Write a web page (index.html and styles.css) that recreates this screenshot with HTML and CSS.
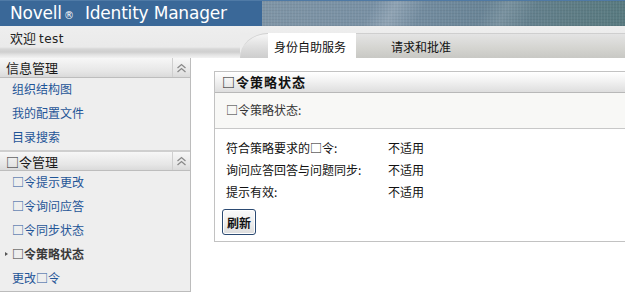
FILE: index.html
```html
<!DOCTYPE html>
<html lang="zh">
<head>
    <meta charset="UTF-8">
    <title>Novell Identity Manager</title>
    <link rel="stylesheet" href="styles.css">
</head>
<body>
    <!-- 顶部标题栏 -->
    <div class="topbar">
        <div class="brand">Novell<span class="reg">®</span> Identity Manager</div>
        <div class="banner-art"></div>
    </div>

    <!-- 欢迎和选项卡 -->
    <div class="navbar">
        <div class="welcome">欢迎 <span class="user">test</span></div>
        <div class="tabs">
            <div class="tab-curve"></div>
            <div class="tab active">身份自助服务</div>
            <div class="tab">请求和批准</div>
        </div>
    </div>

    <div class="layout">
        <!-- 左侧菜单 -->
        <div class="sidebar">
            <div class="section-head">
                <span>信息管理</span>
                <span class="collapse">
                    <svg width="11" height="10" viewBox="0 0 11 10"><path d="M1.5 5 L5.5 1.5 L9.5 5 M1.5 9 L5.5 5.5 L9.5 9" fill="none" stroke="#8a8a8a" stroke-width="1.3"/></svg>
                </span>
            </div>
            <ul class="menu">
                <li><a href="#">组织结构图</a></li>
                <li><a href="#">我的配置文件</a></li>
                <li><a href="#">目录搜索</a></li>
            </ul>
            <div class="section-head second">
                <span>□令管理</span>
                <span class="collapse">
                    <svg width="11" height="10" viewBox="0 0 11 10"><path d="M1.5 5 L5.5 1.5 L9.5 5 M1.5 9 L5.5 5.5 L9.5 9" fill="none" stroke="#8a8a8a" stroke-width="1.3"/></svg>
                </span>
            </div>
            <ul class="menu">
                <li><a href="#">□令提示更改</a></li>
                <li><a href="#">□令询问应答</a></li>
                <li><a href="#">□令同步状态</a></li>
                <li class="current"><span class="marker"></span>□令策略状态</li>
                <li><a href="#">更改□令</a></li>
            </ul>
        </div>

        <!-- 主内容 -->
        <div class="main">
            <div class="panel">
                <div class="panel-head">□令策略状态</div>
                <div class="panel-desc">□令策略状态:</div>
                <div class="panel-body">
                    <div class="row"><span class="label">符合策略要求的□令:</span><span>不适用</span></div>
                    <div class="row"><span class="label">询问应答回答与问题同步:</span><span>不适用</span></div>
                    <div class="row"><span class="label">提示有效:</span><span>不适用</span></div>
                    <button class="btn">刷新</button>
                </div>
            </div>
        </div>
    </div>
</body>
</html>
```

FILE: styles.css
```css
body {
    margin: 0;
    padding: 0;
    width: 625px;
    height: 307px;
    overflow: hidden;
    background: #ffffff;
    font-family: "Noto Sans CJK SC", "DejaVu Sans", sans-serif;
    font-size: 12px;
    color: #222222;
}

/* 标题栏 */
.topbar {
    display: flex;
    height: 26px;
    background: #3a6898;
    border-top: 1px solid #4f7aa6;
    box-sizing: border-box;
}

.brand {
    width: 262px;
    padding-left: 10px;
    box-sizing: border-box;
    color: #ffffff;
    font-family: "DejaVu Sans", sans-serif;
    font-size: 17px;
    line-height: 24px;
    letter-spacing: -0.2px;
    white-space: nowrap;
}

.brand .reg {
    font-size: 10px;
    margin: 0 6px 0 2px;
}

.banner-art {
    flex: 1;
    background:
        repeating-linear-gradient(90deg, rgba(255,255,255,0.06) 0 1px, transparent 1px 3px),
        repeating-linear-gradient(0deg, rgba(0,0,0,0.05) 0 1px, transparent 1px 3px),
        linear-gradient(115deg, transparent 0 30%, rgba(255,255,255,0.18) 36%, transparent 44%, transparent 60%, rgba(255,255,255,0.12) 66%, transparent 74%),
        linear-gradient(90deg, #7f95a6 0%, #7890a4 35%, #6a8597 60%, #5f7d86 85%, #587a80 100%);
}

/* 欢迎和选项卡 */
.navbar {
    display: flex;
    justify-content: space-between;
    height: 32px;
    background: linear-gradient(180deg, #eeeeee 0, #eaeaea 21px, #d6d6d6 23px, #cfcfcf 26px, #e4e4e4 29px, #f2f2f2 32px);
}

.welcome {
    padding: 3px 0 0 10px;
    font-size: 13px;
    line-height: 18px;
    color: #222222;
}

.welcome .user {
    font-family: "DejaVu Sans", sans-serif;
    font-size: 12px;
    letter-spacing: 0.5px;
}

.tabs {
    display: flex;
    align-self: flex-end;
    height: 25px;
    width: 385px;
    background: #ececec;
}

.tab-curve {
    width: 28px;
    background: linear-gradient(180deg, #f6f6f6, #dcdcdc 60%, #cdcdcd);
    border-top-left-radius: 28px 25px;
    border-top: 1px solid #d0d0d0;
}

.tab {
    line-height: 25px;
    font-size: 12px;
    color: #111111;
    background: linear-gradient(180deg, #e4e4e4, #d4d4d0 60%, #c8c8c4);
    border-top: 1px solid #cfcfcf;
    box-sizing: border-box;
    flex: 1;
    padding-left: 35px;
}

.tab.active {
    flex: none;
    width: 88px;
    padding-left: 6px;
    background: #ffffff;
    border-top-color: #ffffff;
}

/* 布局 */
.layout {
    display: flex;
    align-items: flex-start;
}

.sidebar {
    width: 191px;
    box-sizing: border-box;
    background: #eeeeee;
    border-right: 1px solid #bcbcbc;
    border-bottom: 1px solid #bcbcbc;
}

.section-head {
    display: flex;
    justify-content: space-between;
    height: 20px;
    box-sizing: border-box;
    background: linear-gradient(180deg, #f7f7f7, #e6e6e6 70%, #dadada);
    border-bottom: 1px solid #bdbdbd;
    font-size: 13px;
    line-height: 19px;
    color: #1a1a1a;
    padding-left: 6px;
}

.section-head.second {
    border-top: 2px solid #cfcfcf;
    height: 21px;
}

.collapse {
    display: flex;
    align-items: center;
    justify-content: center;
    width: 17px;
    border-left: 1px solid #cfcfcf;
}

.menu {
    list-style: none;
    margin: 0;
    padding: 0;
}

.menu li {
    height: 24px;
    line-height: 22px;
    padding-left: 12px;
    position: relative;
}

.menu a {
    color: #1f5597;
    text-decoration: none;
    font-size: 12px;
}

.menu li.current {
    font-weight: bold;
    color: #3a3a3a;
}

.marker {
    position: absolute;
    left: 5px;
    top: 9px;
    border-left: 3px solid #555555;
    border-top: 2px solid transparent;
    border-bottom: 2px solid transparent;
}

/* 主面板 */
.main {
    flex: 1;
    padding: 13px 0 0 23px;
}

.panel {
    border: 1px solid #c2c2c2;
    border-right: none;
}

.panel-head {
    height: 21px;
    box-sizing: border-box;
    padding-left: 7px;
    background: linear-gradient(180deg, #ffffff, #f0f0f0 50%, #dedede);
    border-bottom: 1px solid #b8b8b8;
    font-weight: bold;
    font-size: 13px;
    line-height: 20px;
    color: #111111;
    letter-spacing: 1px;
}

.panel-desc {
    height: 36px;
    box-sizing: border-box;
    padding-left: 11px;
    background: #f8f8f6;
    border-bottom: 1px solid #c8c8c8;
    line-height: 34px;
    color: #333333;
}

.panel-body {
    padding: 8px 0 6px 7px;
}

.row {
    display: flex;
    height: 22px;
    line-height: 22px;
    padding-left: 4px;
    color: #111111;
}

.label {
    width: 162px;
}

.btn {
    margin-top: 6px;
    width: 34px;
    height: 26px;
    padding: 0;
    font-family: "Noto Sans CJK SC", sans-serif;
    font-size: 12px;
    font-weight: bold;
    color: #111111;
    background: linear-gradient(180deg, #fafafa, #ececec 60%, #dcdcdc);
    border: 1px solid #2b4a72;
    border-radius: 3px;
    box-shadow: inset 0 0 0 1px #ffffff;
}
```
